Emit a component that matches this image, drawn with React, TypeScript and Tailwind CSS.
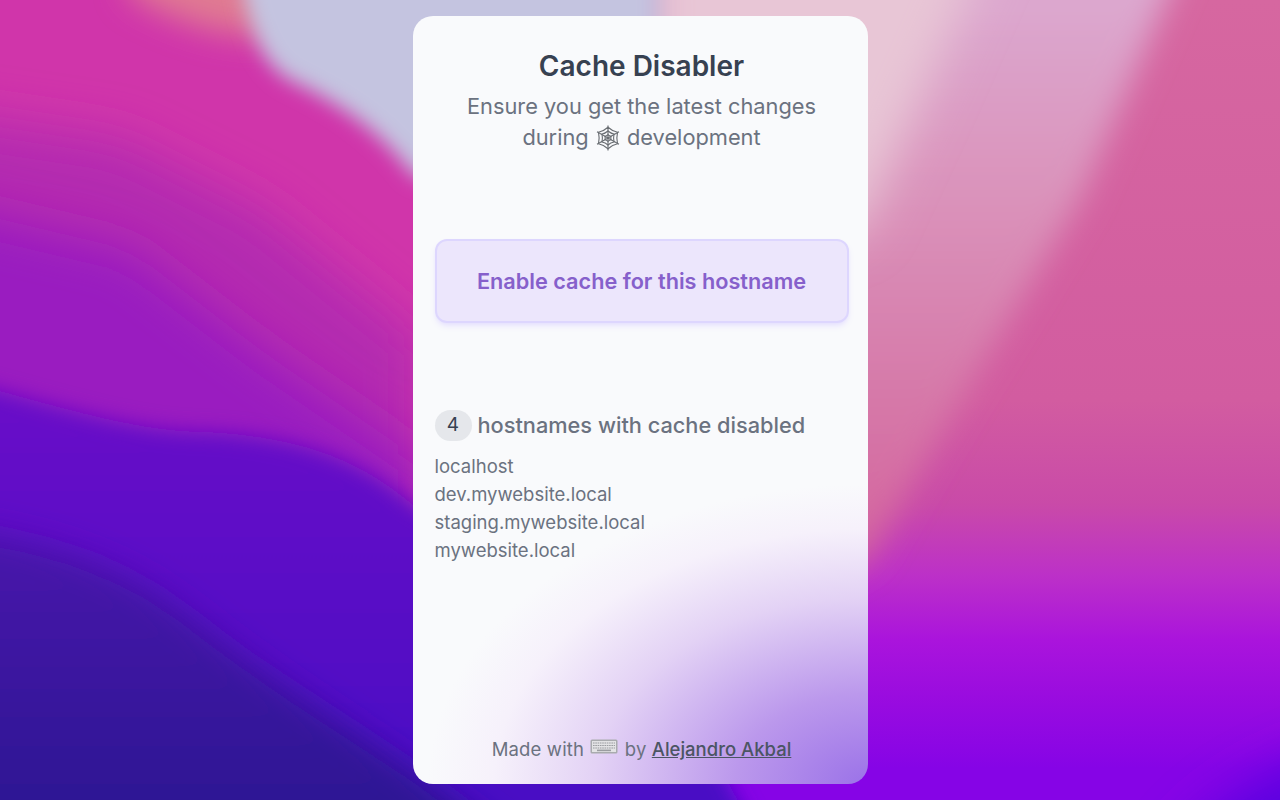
const hostnames = ['localhost', 'dev.mywebsite.local', 'staging.mywebsite.local', 'mywebsite.local'];

function Wallpaper() {
  return (
    <svg className="absolute inset-0 h-full w-full" viewBox="0 0 1280 800" preserveAspectRatio="none">
      <defs>
        <linearGradient id="base" x1="0" y1="0" x2="0" y2="800" gradientUnits="userSpaceOnUse">
          <stop offset="0" stopColor="#d667a0" />
          <stop offset="0.5" stopColor="#d25ca0" />
          <stop offset="0.63" stopColor="#c94aa8" />
          <stop offset="0.72" stopColor="#bc30c8" />
          <stop offset="0.8" stopColor="#aa14dc" />
          <stop offset="0.87" stopColor="#9a0cdf" />
          <stop offset="0.96" stopColor="#8604e6" />
        </linearGradient>
        <linearGradient id="wedge" x1="0" y1="0" x2="0" y2="560" gradientUnits="userSpaceOnUse">
          <stop offset="0" stopColor="#dca8cf" />
          <stop offset="0.36" stopColor="#da92ba" />
          <stop offset="0.72" stopColor="#d678a8" />
          <stop offset="1" stopColor="#d4649e" />
        </linearGradient>
        <linearGradient id="violet" x1="0" y1="380" x2="0" y2="780" gradientUnits="userSpaceOnUse">
          <stop offset="0" stopColor="#6a10c8" />
          <stop offset="1" stopColor="#4a0cc4" />
        </linearGradient>
        <linearGradient id="navy" x1="0" y1="530" x2="0" y2="800" gradientUnits="userSpaceOnUse">
          <stop offset="0" stopColor="#4a12ac" />
          <stop offset="1" stopColor="#2e1294" />
        </linearGradient>
        <filter id="b24" x="-30%" y="-30%" width="160%" height="160%">
          <feGaussianBlur stdDeviation="24" />
        </filter>
        <filter id="b16" x="-30%" y="-30%" width="160%" height="160%">
          <feGaussianBlur stdDeviation="16" />
        </filter>
        <filter id="b10" x="-30%" y="-30%" width="160%" height="160%">
          <feGaussianBlur stdDeviation="10" />
        </filter>
        <filter id="b8" x="-30%" y="-30%" width="160%" height="160%">
          <feGaussianBlur stdDeviation="8" />
        </filter>
      </defs>
      <rect width="1280" height="800" fill="url(#base)" />

      {/* right side */}
      <path d="M700 -80H1200L1080 200L960 400L868 560L700 640Z" fill="url(#wedge)" filter="url(#b16)" />
      <path d="M640 -80H1000L925 90L860 230L640 300Z" fill="#e8c6d6" filter="url(#b24)" />
      <path d="M1170 860C1210 800 1270 770 1360 740V860Z" fill="#5a00e0" filter="url(#b24)" />

      {/* left side */}
      <path d="M-80 -80H640V560H-80Z" fill="#d036aa" filter="url(#b8)" />
      <path d="M-80 110L120 140L260 210L420 340V560H-80Z" fill="#b42cb0" filter="url(#b24)" />
      <path d="M-80 200L130 250L260 350L420 460V600H-80Z" fill="#9a1cc0" filter="url(#b24)" />
      <path d="M120 -80H300L290 30C250 45 190 30 130 -5Z" fill="#e07a92" filter="url(#b16)" />
      <path d="M235 -80H660V260L413 175C380 130 340 105 300 85C265 70 245 40 235 -80Z" fill="#c4c4e0" filter="url(#b10)" />
      <path d="M-80 370C40 400 120 430 200 432C300 436 360 460 413 505L640 620L770 860H-80Z" fill="url(#violet)" filter="url(#b10)" />
      <path d="M-80 525C60 540 130 570 200 625C270 680 340 720 420 775L560 880H-80Z" fill="url(#navy)" filter="url(#b16)" />
    </svg>
  );
}

function WebIcon() {
  return (
    <svg className="inline-block h-[26px] w-[26px] align-[-6px]" viewBox="0 0 26 26" fill="none" stroke="#6b6f74" strokeWidth="1.15">
      <path d="M13 0.5V25.5M2 6.8L24 19.2M24 6.8L2 19.2" />
      <path d="M13 2.2Q17.5 6.2 22.5 7.3Q21.2 13 22.5 18.7Q17.5 19.8 13 23.8Q8.5 19.8 3.5 18.7Q4.8 13 3.5 7.3Q8.5 6.2 13 2.2Z" />
      <path d="M13 6Q15.7 8.4 19 9Q18.2 13 19 17Q15.7 17.6 13 20Q10.3 17.6 7 17Q7.8 13 7 9Q10.3 8.4 13 6Z" />
      <path d="M13 9.6Q14.6 11 16 11.2Q15.6 13 16 14.8Q14.6 15 13 16.4Q11.4 15 10 14.8Q10.4 13 10 11.2Q11.4 11 13 9.6Z" />
    </svg>
  );
}

function KeyboardIcon() {
  return (
    <svg className="mx-[1px] inline-block h-[15px] w-[28px] align-[2px]" viewBox="0 0 28 15">
      <rect x="0.5" y="0.5" width="27" height="14" rx="1.5" fill="#a9abae" />
      <rect x="2" y="2" width="24" height="11" fill="#e3e3e5" />
      <path d="M3 4H25M3 6.5H25M3 9H25" stroke="#9a9ca0" strokeWidth="1.2" strokeDasharray="1.6 0.7" />
      <rect x="7" y="10.6" width="14" height="1.6" fill="#9a9ca0" />
    </svg>
  );
}

export default function App() {
  return (
    <main className="relative flex h-[800px] w-[1280px] justify-center overflow-hidden bg-[#d0609c] py-4 font-['Inter',sans-serif]">
      <Wallpaper />

      {/* Card */}
      <div className="relative flex h-[768px] w-[455px] flex-col overflow-hidden rounded-[20px] bg-[#f9fafc] bg-[radial-gradient(ellipse_440px_300px_at_100%_100%,#9b72e8_0%,#bb98ec_30%,#e3d2f5_62%,#f6f1fb_85%,transparent_100%)] pr-[19px] pl-[22px]">
        <div className="pt-[31px] text-center">
          <h1 className="text-[28px] leading-[38px] font-semibold text-[#374151]">Cache Disabler</h1>
          <p className="mt-[6px] text-[21.8px] leading-[31px] text-[#6b7280]">
            Ensure you get the latest changes
            <br />
            during <WebIcon /> development
          </p>
        </div>

        <button className="mt-[86px] h-[84px] w-[414px] rounded-xl border-2 border-[#ddd6fe] bg-[#ece6fc] text-[21.7px] font-semibold text-[#8660cb] shadow-md shadow-violet-200/60">
          Enable cache for this hostname
        </button>

        <div className="mt-[87px] flex items-center gap-[6px]">
          <span className="flex h-[31px] w-[37px] items-center justify-center rounded-full bg-[#e5e7eb] text-[19px] text-[#374151]">4</span>
          <h2 className="text-[21.75px] leading-[31px] font-medium text-[#6b7280]">hostnames with cache disabled</h2>
        </div>

        <ul className="mt-[11px] text-[18.5px] leading-[28px] text-[#6b7280]">
          {hostnames.map((name) => (
            <li key={name}>{name}</li>
          ))}
        </ul>

        <p className="mt-auto pb-[21px] text-center text-[18.5px] leading-[28px] tracking-[0.15px] text-[#6b7280]">
          Made with <KeyboardIcon /> by{' '}
          <a href="#" className="font-medium tracking-normal text-[#4b5563] underline">Alejandro Akbal</a>
        </p>
      </div>
    </main>
  );
}
